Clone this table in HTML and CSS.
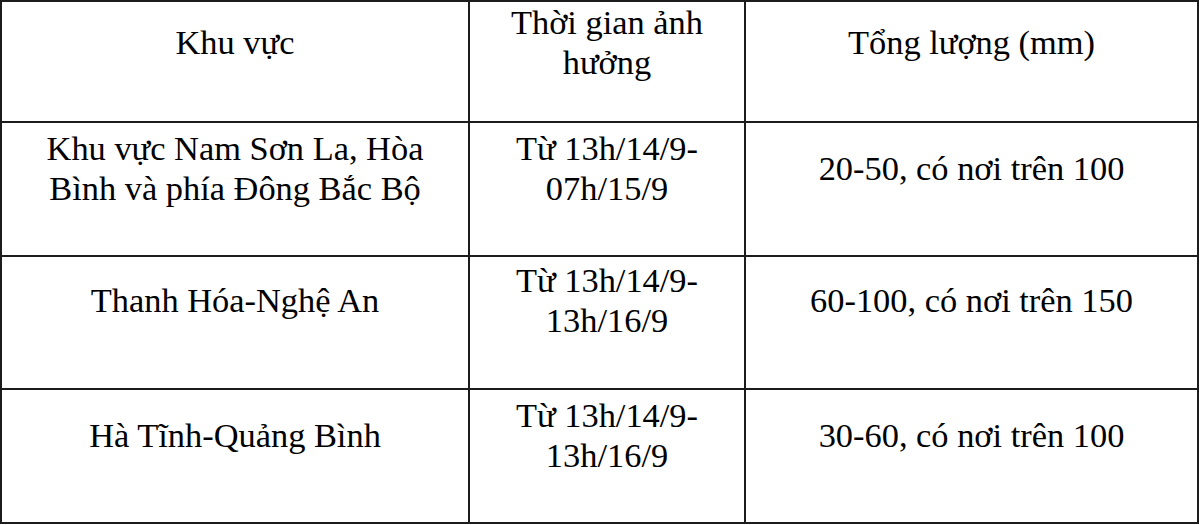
FILE: index.html
```html
<!DOCTYPE html>
<html lang="vi">
<head>
<meta charset="utf-8">
<title>Lượng mưa</title>
<link rel="stylesheet" href="styles.css">
</head>
<body>
<table class="rain">
  <colgroup>
    <col class="c1">
    <col class="c2">
    <col class="c3">
  </colgroup>
  <tr class="head">
    <td>Khu vực</td>
    <td>Thời gian ảnh<br>hưởng</td>
    <td>Tổng lượng (mm)</td>
  </tr>
  <tr class="row r1">
    <td>Khu vực Nam Sơn La, Hòa<br>Bình và phía Đông Bắc Bộ</td>
    <td>Từ 13h/14/9-<br>07h/15/9</td>
    <td>20-50, có nơi trên 100</td>
  </tr>
  <tr class="row r2">
    <td>Thanh Hóa-Nghệ An</td>
    <td>Từ 13h/14/9-<br>13h/16/9</td>
    <td>60-100, có nơi trên 150</td>
  </tr>
  <tr class="row r3">
    <td>Hà Tĩnh-Quảng Bình</td>
    <td>Từ 13h/14/9-<br>13h/16/9</td>
    <td>30-60, có nơi trên 100</td>
  </tr>
</table>
</body>
</html>
```

FILE: styles.css
```css
html, body {
  margin: 0;
  padding: 0;
  background: #ffffff;
}

.rain {
  border-collapse: collapse;
  table-layout: fixed;
  width: 1199px;
  font-family: "Liberation Serif", "Times New Roman", serif;
  font-size: 34.4px;
  line-height: 40px;
  color: #000000;
}

.c1 { width: 468px; }
.c2 { width: 276px; }
.c3 { width: auto; }

.rain td {
  border: 2px solid #1c1c1c;
  text-align: center;
  vertical-align: middle;
  padding: 5px 6px 47px;
}

.head td {
  padding-top: 0;
  padding-bottom: 39px;
}

.r2 td {
  padding-top: 3px;
  padding-bottom: 48px;
}

.r3 td {
  padding-bottom: 47px;
}
```
